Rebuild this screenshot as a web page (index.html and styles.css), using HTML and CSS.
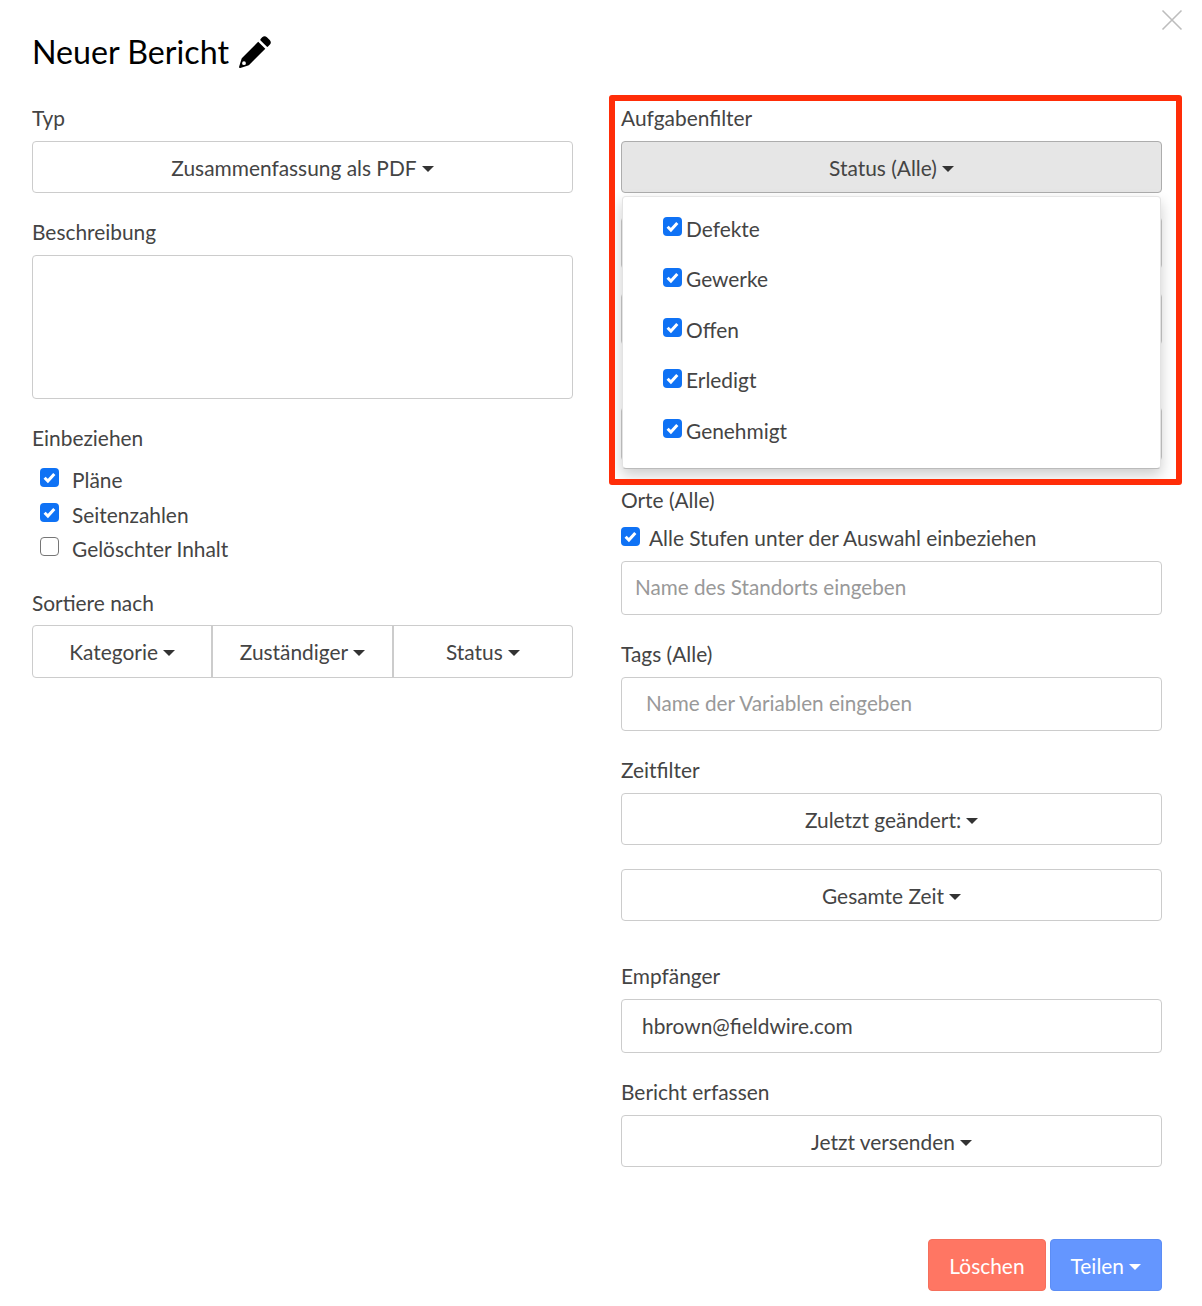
FILE: index.html
```html
<!DOCTYPE html>
<html lang="de">
<head>
<meta charset="utf-8">
<title>Neuer Bericht</title>
<link rel="stylesheet" href="styles.css">
</head>
<body>
<svg class="defs" width="0" height="0" aria-hidden="true">
  <symbol id="tick" viewBox="0 0 19 19"><path d="M4.600 9.800l3.300 3.300 6.400-7" fill="none" stroke="#fff" stroke-width="3"/></symbol>
</svg>
<main class="page">
  <button class="close" aria-label="Schließen">
    <svg viewBox="0 0 22 22" width="22" height="22"><path d="M1.500 1.500l19 19M20.500 1.500l-19 19" stroke="#bdbdbd" stroke-width="1.600" fill="none"/></svg>
  </button>
  <header class="title-row">
    <h1 class="title">Neuer Bericht</h1>
    <svg class="pencil" viewBox="0 0 32 32" width="32" height="32"><path fill="#000" d="M21.600 3l1.600-1.700c1.500-1.500 3.300-1.500 4.700 0l2.800 2.800c1.500 1.500 1.500 3.300 0 4.700L29 10.600c-.4.400-.9.400-1.300 0l-6.100-6.100c-.4-.5-.4-1 0-1.500z"/><path fill="#000" fill-rule="evenodd" d="M19.200 5.700l7.100 7.100L10.100 29c-.3.300-.6.400-1 .5L1.300 31.900c-.7.200-1.400-.4-1.200-1.200L2.500 22.900c.1-.4.200-.7.500-1zM5 25.300a1.900 1.900 0 1 0 0 3.800a1.900 1.900 0 1 0 0-3.800z"/></svg>
  </header>
  <div class="columns">
    <section class="column">
      <div class="field">
        <div class="label">Typ</div>
        <button class="control">Zusammenfassung als PDF<i class="caret"></i></button>
      </div>
      <div class="field">
        <div class="label">Beschreibung</div>
        <div class="input textarea"></div>
      </div>
      <div class="field field-checks">
        <div class="label">Einbeziehen</div>
        <div class="check-list">
          <label class="check"><span class="box on"><svg width="19" height="19"><use href="#tick"/></svg></span>Pläne</label>
          <label class="check"><span class="box on"><svg width="19" height="19"><use href="#tick"/></svg></span>Seitenzahlen</label>
          <label class="check"><span class="box"></span>Gelöschter Inhalt</label>
        </div>
      </div>
      <div class="field">
        <div class="label label-sort">Sortiere nach</div>
        <div class="group">
          <button class="control">Kategorie<i class="caret"></i></button>
          <button class="control">Zuständiger<i class="caret"></i></button>
          <button class="control">Status<i class="caret"></i></button>
        </div>
      </div>
    </section>
    <section class="column">
      <div class="field field-menu">
        <div class="label">Aufgabenfilter</div>
        <button class="control open">Status (Alle)<i class="caret"></i></button>
        <div class="menu">
          <label class="menu-item"><span class="box on"><svg width="19" height="19"><use href="#tick"/></svg></span>Defekte</label>
          <label class="menu-item"><span class="box on"><svg width="19" height="19"><use href="#tick"/></svg></span>Gewerke</label>
          <label class="menu-item"><span class="box on"><svg width="19" height="19"><use href="#tick"/></svg></span>Offen</label>
          <label class="menu-item"><span class="box on"><svg width="19" height="19"><use href="#tick"/></svg></span>Erledigt</label>
          <label class="menu-item"><span class="box on"><svg width="19" height="19"><use href="#tick"/></svg></span>Genehmigt</label>
        </div>
      </div>
      <div class="field"><div class="control"></div></div>
      <div class="field"><div class="control"></div></div>
      <div class="field">
        <div class="label"></div>
        <div class="input"></div>
      </div>
      <div class="field">
        <div class="label">Orte (Alle)</div>
        <label class="check check-tight"><span class="box on"><svg width="19" height="19"><use href="#tick"/></svg></span>Alle Stufen unter der Auswahl einbeziehen</label>
        <div class="input placeholder">Name des Standorts eingeben</div>
      </div>
      <div class="field">
        <div class="label">Tags (Alle)</div>
        <div class="input placeholder wide-pad">Name der Variablen eingeben</div>
      </div>
      <div class="field">
        <div class="label">Zeitfilter</div>
        <button class="control">Zuletzt geändert:<i class="caret"></i></button>
      </div>
      <div class="field field-after">
        <button class="control">Gesamte Zeit<i class="caret"></i></button>
      </div>
      <div class="field">
        <div class="label">Empfänger</div>
        <div class="input value">hbrown@fieldwire.com</div>
      </div>
      <div class="field">
        <div class="label">Bericht erfassen</div>
        <button class="control">Jetzt versenden<i class="caret"></i></button>
      </div>
      <footer class="actions">
        <button class="action danger">Löschen</button>
        <button class="action primary">Teilen<i class="caret"></i></button>
      </footer>
    </section>
  </div>
  <div class="highlight"></div>
</main>
</body>
</html>
```
FILE: styles.css
```css
* { box-sizing: border-box; }
html, body { margin: 0; padding: 0; background: #fff; }
body { font-family: Lato, "Liberation Sans", sans-serif; font-size: 20.9px; color: #444; overflow: hidden; }
.defs { position: absolute; }
.page { position: relative; width: 1202px; height: 1306px; padding: 32px 40px 0 32px; }
.close { position: absolute; top: 9px; right: 19px; width: 22px; height: 22px; padding: 0; border: 0; background: none; }
.close svg { display: block; }
.title-row { display: flex; align-items: center; gap: 10px; height: 40px; }
.title { margin: 0; font-size: 32.2px; font-weight: 400; line-height: 40px; color: #000; }
.pencil { flex: none; }
.columns { display: flex; gap: 48px; margin-top: 31px; }
.column { flex: 1 1 0; min-width: 0; }
.field { margin-bottom: 24px; }
.field-menu { position: relative; }
.field-checks { margin-bottom: 22px; }
.label { height: 30px; line-height: 30px; margin-bottom: 8px; white-space: nowrap; }
.label-sort { margin-bottom: 7px; }
.control { display: flex; align-items: center; justify-content: center; width: 100%; height: 52px; padding: 0; border: 1px solid #ccc; border-radius: 4px; background: #fff; font: inherit; color: inherit; }
.control.open { background: #e6e6e6; border-color: #adadad; }
.caret { display: block; width: 0; height: 0; margin-left: 5px; margin-top: 3px; border-top: 6.5px solid #333; border-left: 6.5px solid transparent; border-right: 6.5px solid transparent; }
.input { display: flex; align-items: center; height: 54px; padding: 0 13px 2px; border: 1px solid #ccc; border-radius: 4px; background: #fff; }
.textarea { height: 144px; }
.placeholder { color: #999; font-size: 20.7px; }
.wide-pad { padding-left: 24px; }
.value { padding-left: 20px; }
.check-list { margin-top: -6.700px; padding: 8px 0 0 8px; }
.check { display: flex; align-items: center; gap: 13px; height: 34.500px; }
.check-tight { gap: 9px; height: 30px; margin: -1px 0 9px; }
.box { flex: none; display: block; width: 19px; height: 19px; margin-top: -4px; border: 1px solid #767676; border-radius: 4px; background: #fff; }
.box.on { border: 0; background: #0f72f5; }
.box svg { display: block; }
.check-tight .box { margin-top: -1px; }
.group { display: flex; }
.group .control { flex: 1 1 0; height: 53px; border-radius: 0; }
.group .control + .control { border-left-width: 2px; margin-left: -1px; }
.group .control:first-child { border-radius: 4px 0 0 4px; }
.group .control:last-child { border-radius: 0 4px 4px 0; }
.menu { position: absolute; top: 93px; left: 1px; right: 1px; height: 273px; padding: 5.800px 0 0 40px; border-radius: 4px; background: #fff; border: 1px solid #e3e3e3; border-top-color: #e6e6e6; border-bottom-color: #bbb; box-shadow: 0 6px 14px rgba(0,0,0,.2); z-index: 2; }
.menu-item { display: flex; align-items: center; gap: 4px; height: 50.600px; }
.menu-item .box { margin-top: -3px; }
.field-after { margin-bottom: 40px; }
.actions { display: flex; justify-content: flex-end; gap: 4px; margin-top: 72px; }
.action { display: flex; align-items: center; height: 52px; padding: 0 20px; border-radius: 4px; font: inherit; color: #fff; }
.danger { background: #ff7663; border: 1px solid #f56f5c; }
.primary { background: #6496ff; border: 1px solid #5c8df5; }
.primary .caret { border-top-color: #fff; }
.highlight { position: absolute; left: 609px; top: 95px; width: 573px; height: 390px; border: 6px solid #ff2d08; border-radius: 3px; z-index: 3; }
```
